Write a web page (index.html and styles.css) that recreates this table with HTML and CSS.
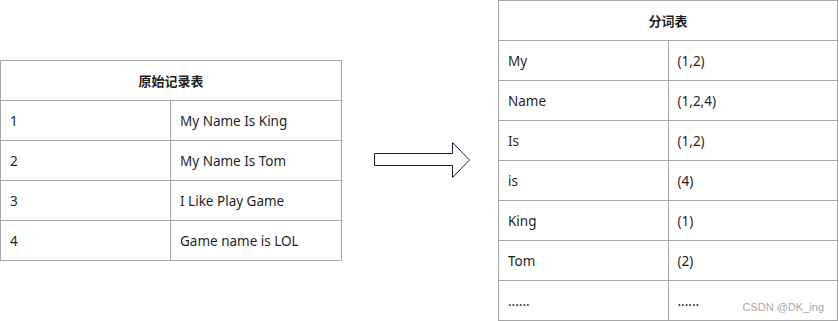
FILE: index.html
```html
<!DOCTYPE html>
<html lang="zh">
<head>
<meta charset="utf-8">
<link rel="stylesheet" href="styles.css">
</head>
<body>
<div class="stage">
  <table class="tbl tbl-left">
    <colgroup><col class="col-a"><col></colgroup>
    <tr><th colspan="2">原始记录表</th></tr>
    <tr><td>1</td><td>My Name Is King</td></tr>
    <tr><td>2</td><td>My Name Is Tom</td></tr>
    <tr><td>3</td><td>I Like Play Game</td></tr>
    <tr><td>4</td><td>Game name is LOL</td></tr>
  </table>
  <svg class="arrow" width="100" height="40" viewBox="0 0 100 40">
    <polygon points="2.5,13.5 80.5,13.5 80.5,2.5 97.5,20 80.5,37.5 80.5,25.5 2.5,25.5" fill="#fff" stroke="#1c1c44" stroke-width="1"/>
  </svg>
  <div class="right-wrap">
    <table class="tbl tbl-right">
      <tr><th colspan="2">分词表</th></tr>
      <tr><td>My</td><td>(1,2)</td></tr>
      <tr><td>Name</td><td>(1,2,4)</td></tr>
      <tr><td>Is</td><td>(1,2)</td></tr>
      <tr><td>is</td><td>(4)</td></tr>
      <tr><td>King</td><td>(1)</td></tr>
      <tr><td>Tom</td><td>(2)</td></tr>
      <tr><td>......</td><td>......</td></tr>
    </table>
    <span class="watermark">CSDN @DK_ing</span>
  </div>
</div>
</body>
</html>
```

FILE: styles.css
```css
html, body {
  margin: 0;
  padding: 0;
  background: #fff;
}
body {
  font-family: "Noto Sans", "Noto Sans CJK SC", sans-serif;
  color: #1f1f1f;
}
.stage {
  display: flex;
  align-items: center;
  height: 321px;
}
.tbl {
  border-collapse: collapse;
  font-size: 13.5px;
  table-layout: fixed;
}
.tbl tr {
  height: 40px;
}
.tbl th, .tbl td {
  border: 1px solid #a6a6a6;
  padding: 0 9px;
  text-align: left;
}
.tbl th {
  text-align: center;
  font-weight: bold;
  font-size: 13px;
  font-family: "Noto Sans CJK SC", sans-serif;
}
.tbl-left {
  width: 342px;
}
.col-a {
  width: 170px;
}
.arrow {
  margin-left: 30px;
  margin-top: -2px;
  display: block;
}
.right-wrap {
  position: relative;
  margin-left: 26px;
}
.tbl-right {
  width: 340px;
}
.watermark {
  position: absolute;
  right: 14px;
  bottom: 8px;
  font-family: "Liberation Sans", sans-serif;
  font-size: 11px;
  color: #a8a8a8;
}
```
